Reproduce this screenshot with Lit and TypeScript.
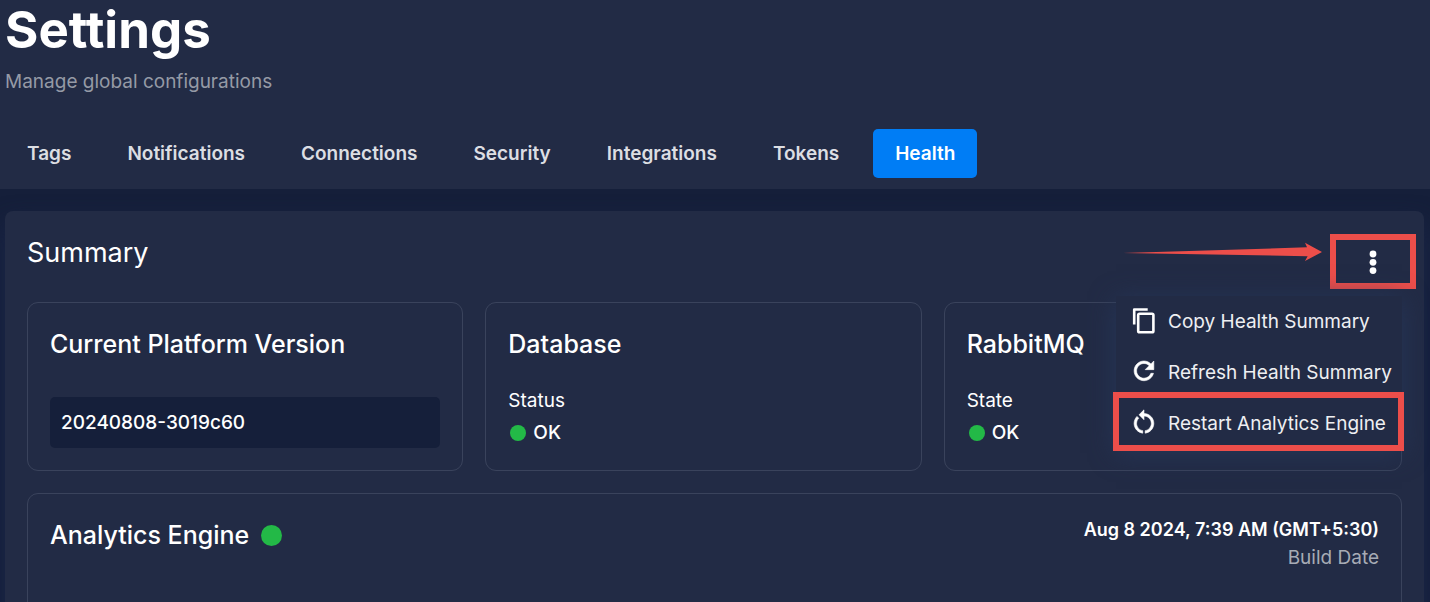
import { LitElement, html, css, svg } from "lit";
import { customElement, property, state } from "lit/decorators.js";
import { classMap } from "lit/directives/class-map.js";

const TABS = ["Tags", "Notifications", "Connections", "Security", "Integrations", "Tokens", "Health"];

const ICONS = {
  copy: svg`<path d="M3.200 17.500V2.500h13.500" fill="none" stroke="currentColor" stroke-width="2.600" stroke-linejoin="round"/><rect x="7.200" y="6.700" width="15.200" height="18.600" rx="1.400" fill="none" stroke="currentColor" stroke-width="2.600"/>`,
  refresh: svg`<path transform="translate(-1.800 -1.900) scale(1.230)" d="M17.650 6.350C16.200 4.900 14.210 4 12 4c-4.420 0-7.990 3.580-7.990 8s3.570 8 7.990 8c3.730 0 6.840-2.550 7.730-6h-2.080c-.820 2.330-3.040 4-5.650 4-3.310 0-6-2.690-6-6s2.690-6 6-6c1.660 0 3.140.690 4.220 1.780L13 11h7V4l-2.350 2.350z" fill="currentColor" stroke="currentColor" stroke-width=".5"/>`,
  restart: svg`<path transform="translate(-1.800 -1.600) scale(1.230)" d="M12 5V2L8 6l4 4V7c3.310 0 6 2.690 6 6 0 2.970-2.170 5.430-5 5.910v2.020c3.950-.490 7-3.850 7-7.930 0-4.420-3.580-8-8-8zM6 13c0-1.650.670-3.150 1.760-4.240L6.340 7.340C4.900 8.790 4 10.790 4 13c0 4.080 3.050 7.440 7 7.930v-2.020c-2.830-.480-5-2.940-5-5.910z" fill="currentColor" stroke="currentColor" stroke-width=".5"/>`,
};

@customElement("status-dot")
export class StatusDot extends LitElement {
  static styles = css`
    :host {
      display: block;
      flex: none;
      width: 16px;
      height: 16px;
      border-radius: 50%;
      background: #23b947;
    }
    :host([large]) {
      width: 21px;
      height: 21px;
    }
  `;
  render() {
    return html``;
  }
}

@customElement("health-card")
export class HealthCard extends LitElement {
  static styles = css`
    :host {
      display: block;
      box-sizing: border-box;
      border: 1px solid #3a435c;
      border-radius: 11px;
      padding: 22px;
    }
    .title {
      margin: 0;
      font-size: 25px;
      line-height: 38px;
      font-weight: 500;
    }
    .body {
      margin-top: 34px;
    }
  `;
  @property() heading = "";
  render() {
    return html`<h3 class="title">${this.heading}</h3>
      <div class="body"><slot></slot></div>`;
  }
}

@customElement("summary-menu")
export class SummaryMenu extends LitElement {
  static styles = css`
    :host {
      display: block;
      position: relative;
    }
    button {
      font: inherit;
      color: inherit;
      background: none;
      border: 0;
      cursor: pointer;
    }
    .more {
      display: flex;
      align-items: center;
      justify-content: center;
      width: 74px;
      height: 43px;
      padding: 0;
      outline: 6px solid #ec4e4a;
    }
    .arrow {
      position: absolute;
      right: 87px;
      top: 2px;
      width: 200px;
      height: 20px;
    }
    .menu {
      position: absolute;
      top: 56px;
      right: 8px;
      z-index: 2;
      width: 286px;
      background: #222b45;
      box-shadow: 0 4px 24px #263658;
    }
    .item {
      position: relative;
      display: flex;
      align-items: center;
      gap: 11px;
      width: 100%;
      height: 51px;
      padding: 0 0 0 15px;
      font-size: 19px;
      line-height: 28px;
      color: #eeeff2;
      white-space: nowrap;
      text-align: left;
    }
    .item.marked::after {
      content: "";
      position: absolute;
      inset: -6px -2px -2px -3px;
      border: 6px solid #ec4e4a;
    }
    .icon {
      flex: none;
      width: 26px;
      height: 28px;
      margin-bottom: 2px;
      color: #fff;
    }
  `;
  @state() private open = true;
  render() {
    return html`
      <svg class="arrow" viewBox="0 0 200 20" aria-hidden="true">
        <path d="M0 11 184 5.300 182 .800 199 10 182 19 184.600 14.200z" fill="#ec4e4a" />
      </svg>
      <button class="more" aria-label="Summary actions" aria-expanded=${this.open} @click=${() => (this.open = !this.open)}>
        <svg width="8" height="24" viewBox="0 0 8 24" fill="#fff">
          <circle cx="4" cy="4" r="3.400" /><circle cx="4" cy="12.300" r="3.400" /><circle cx="4" cy="20.600" r="3.400" />
        </svg>
      </button>
      ${this.open
        ? html`<div class="menu" role="menu">
            ${this.item("Copy Health Summary", ICONS.copy)} ${this.item("Refresh Health Summary", ICONS.refresh)}
            ${this.item("Restart Analytics Engine", ICONS.restart, true)}
          </div>`
        : null}
    `;
  }
  private item(label: string, icon: unknown, marked = false) {
    return html`<button role="menuitem" class=${classMap({ item: true, marked })}>
      <svg class="icon" viewBox="0 0 26 28" aria-hidden="true">${icon}</svg>${label}
    </button>`;
  }
}

@customElement("app-root")
export class AppRoot extends LitElement {
  static styles = css`
    :host {
      display: flex;
      flex-direction: column;
      box-sizing: border-box;
      height: 100vh;
      overflow: hidden;
      background: #151f3a;
      color: #fff;
      font-family: Inter, "Liberation Sans", sans-serif;
      font-size: 19px;
      line-height: 30px;
    }
    .header {
      background: #222b45;
      padding: 0 5px 11px;
    }
    .title {
      margin: 0;
      font-size: 51px;
      line-height: 60px;
      font-weight: 700;
    }
    .subtitle {
      margin: 7px 0 32px;
      color: #959aa6;
    }
    .tabs {
      display: flex;
      gap: 12px;
    }
    .tab {
      padding: 10px 22px 9px;
      border: 0;
      border-radius: 5px;
      background: none;
      color: #dcdee3;
      font: inherit;
      font-weight: 600;
      cursor: pointer;
    }
    .tab.active {
      background: #007df5;
      color: #fff;
    }
    .panel {
      flex: 1 0 auto;
      margin: 22px 6px 0 5px;
      padding: 22px;
      border-radius: 8px 8px 0 0;
      background: #222b45;
      box-shadow: 0 12px 24px #1b2649;
    }
    .panel-head {
      display: flex;
      justify-content: space-between;
      align-items: flex-start;
      height: 69px;
    }
    .panel-title {
      margin: 0;
      font-size: 27px;
      line-height: 40px;
      font-weight: 400;
    }
    .actions {
      margin: 7px -8px 0 0;
    }
    .cards {
      display: grid;
      grid-template-columns: repeat(3, 1fr);
    }
    .cards > :not(:last-child) {
      margin-right: 22px;
    }
    .version {
      display: block;
      padding: 11px;
      border-radius: 5px;
      background: #151f3a;
      font-weight: 500;
      line-height: 29px;
    }
    .label {
      margin-top: -11px;
    }
    .status {
      display: flex;
      align-items: center;
      gap: 7px;
      margin-top: 2px;
      padding-left: 2px;
      font-weight: 500;
    }
    .engine {
      display: flex;
      justify-content: space-between;
      margin-top: 22px;
      padding: 22px;
      min-height: 130px;
      border: 1px solid #3a435c;
      border-radius: 11px 11px 0 0;
    }
    .engine-title {
      display: flex;
      align-items: center;
      gap: 12px;
      height: 38px;
      margin: 0;
      font-size: 25px;
      font-weight: 500;
    }
    .build {
      line-height: 28px;
      text-align: right;
    }
    .build-date {
      font-size: 18px;
      font-weight: 600;
    }
    .build-label {
      color: #a7abb5;
    }
  `;
  @state() private active = "Health";
  render() {
    return html`
      <header class="header">
        <h1 class="title">Settings</h1>
        <p class="subtitle">Manage global configurations</p>
        <nav class="tabs">
          ${TABS.map(
            (tab) =>
              html`<button class=${classMap({ tab: true, active: tab === this.active })} @click=${() => (this.active = tab)}>${tab}</button>`
          )}
        </nav>
      </header>
      <main class="panel">
        <div class="panel-head">
          <h2 class="panel-title">Summary</h2>
          <summary-menu class="actions"></summary-menu>
        </div>
        <div class="cards">
          <health-card heading="Current Platform Version"><span class="version">20240808-3019c60</span></health-card>
          <health-card heading="Database">
            <div class="label">Status</div>
            <div class="status"><status-dot></status-dot>OK</div>
          </health-card>
          <health-card heading="RabbitMQ">
            <div class="label">State</div>
            <div class="status"><status-dot></status-dot>OK</div>
          </health-card>
        </div>
        <section class="engine">
          <h3 class="engine-title">Analytics Engine <status-dot large></status-dot></h3>
          <div class="build">
            <div class="build-date">Aug 8 2024, 7:39 AM (GMT+5:30)</div>
            <div class="build-label">Build Date</div>
          </div>
        </section>
      </main>
    `;
  }
}
